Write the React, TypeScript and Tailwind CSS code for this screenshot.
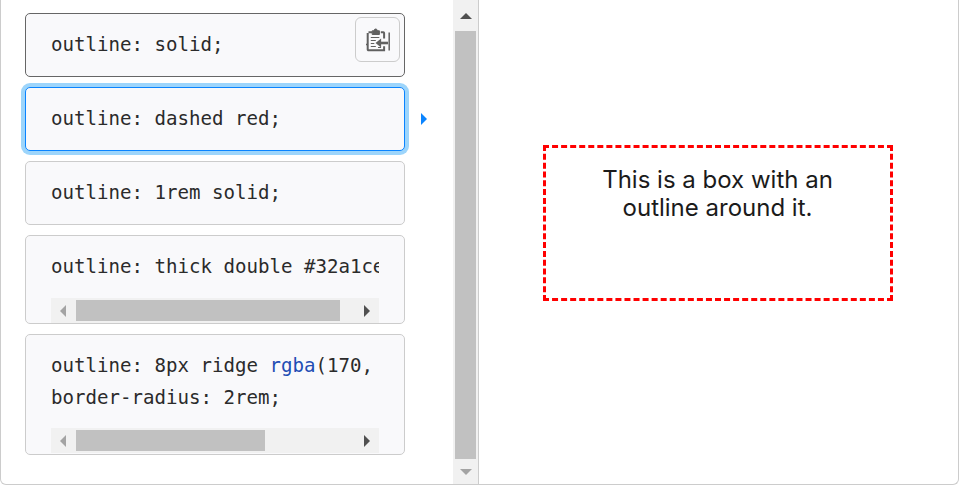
import React from "react";

function HBar({ thumb }: { thumb: string }) {
  return (
    <div className="flex h-[25px] w-[328px] items-center bg-[#f1f1f1]">
      <div className="flex h-full w-[25px] shrink-0 items-center justify-center pr-[1px]">
        <div className="h-0 w-0 border-y-[6px] border-r-[6px] border-y-transparent border-r-[#a3a3a3]" />
      </div>
      <div className="flex h-[21px] flex-1">
        <div className={`h-full bg-[#c1c1c1] ${thumb}`} />
      </div>
      <div className="flex h-full w-[25px] shrink-0 items-center justify-center">
        <div className="h-0 w-0 border-y-[6px] border-l-[6px] border-y-transparent border-l-[#505050]" />
      </div>
    </div>
  );
}

function ClipIcon() {
  return (
    <svg width="24" height="24" viewBox="0 0 24 24" fill="none" stroke="#606060">
      <path d="M1.7 5v16.5a.8.8 0 0 0 .8.8h15.6v-4M18.1 10.5V5a.8.8 0 0 0-.8-.8h-2.5M6 4.2H2.5" strokeWidth="2" />
      <path d="M0 16.5h1.7" strokeWidth="1.5" />
      <path d="M6.2 6.5V2.8h1.6C8.3.4 11 .4 11.5 2.8h1.9v3.7z" fill="#606060" strokeWidth="1" />
      <path d="M4.8 9.5h8.5M4.8 12.5h5M4.8 15.5h3.5M4.8 18.5h5M12 19.5h3" strokeWidth="1.2" />
      <path d="M23.2 4.5v18" strokeWidth="1.5" />
      <path d="M22 15H13" strokeWidth="2.6" />
      <path d="M9.5 15l5.6-4.6v9.2z" fill="#606060" stroke="none" />
    </svg>
  );
}

const line = "block h-[32.5px] whitespace-pre font-['DejaVu_Sans_Mono',monospace] text-[19.1px] leading-[32.5px]";

export default function App() {
  return (
    <div className="flex h-[485px] w-[959px] overflow-hidden rounded-b-[6px] border-x border-b border-[#cccccc] bg-white font-['Liberation_Sans',sans-serif]">
      <div className="flex w-[478px] shrink-0 border-r border-[#cccccc]">
        <div className="flex w-[452px] shrink-0 flex-col gap-[10px] pl-[24px] pt-[13px] text-[#2b2b2b]">
          <div className="relative w-[380px] rounded-[5px] border border-[#666666] bg-[#f9f9fb] px-[25px] py-[14.75px]">
            <code className={line}>outline: solid;</code>
            <button className="absolute right-[4px] top-[3px] flex h-[45px] w-[45px] items-center justify-center rounded-[6px] border border-[#cccccc] bg-[#f9f9fb]">
              <ClipIcon />
            </button>
          </div>

          <div className="relative w-[380px] rounded-[5px] border border-[#0a84ff] bg-[#f9f9fb] px-[25px] py-[14.75px] shadow-[0_0_0_4px_#9dd5fb]">
            <code className={line}>outline: dashed red;</code>
            <div className="absolute left-[395px] top-[25px] h-0 w-0 border-y-[6px] border-l-[6px] border-y-transparent border-l-[#0a84ff]" />
          </div>

          <div className="w-[380px] rounded-[5px] border border-[#cccccc] bg-[#f9f9fb] px-[25px] py-[14.75px]">
            <code className={line}>outline: 1rem solid;</code>
          </div>

          <div className="w-[380px] rounded-[5px] border border-[#cccccc] bg-[#f9f9fb] pl-[25px]">
            <div className="w-[328px] overflow-hidden py-[14.75px]">
              <code className={line}>outline: thick double #32a1ce;</code>
            </div>
            <HBar thumb="w-[264px]" />
          </div>

          <div className="w-[380px] rounded-[5px] border border-[#cccccc] bg-[#f9f9fb] pb-[1px] pl-[25px]">
            <div className="w-[328px] overflow-hidden pb-[13.5px] pt-[14.75px]">
              <code className={line}>
                outline: 8px ridge <span className="text-[#1f4eb4]">rgba</span>(170, 50, 220, .6);
              </code>
              <code className={line}>border-radius: 2rem;</code>
            </div>
            <HBar thumb="w-[189px]" />
          </div>
        </div>

        <div className="flex w-[25px] shrink-0 flex-col items-center bg-[#f1f1f1]">
          <div className="flex h-[31px] items-center justify-center">
            <div className="h-0 w-0 border-x-[6px] border-b-[6px] border-x-transparent border-b-[#505050]" />
          </div>
          <div className="w-[21px] flex-1 bg-[#c1c1c1]" />
          <div className="flex h-[25px] items-center justify-center">
            <div className="h-0 w-0 border-x-[6px] border-t-[6px] border-x-transparent border-t-[#a3a3a3]" />
          </div>
        </div>
      </div>

      <div className="flex flex-1 justify-center pr-[2px] pt-[148px]">
        <div className="h-[150px] w-[344px] px-[30px] pt-[18px] text-center font-['Inter',sans-serif] text-[24px] leading-[28px] text-[#1b1b1b] outline-3 outline-[#ff0000] outline-dashed">
          This is a box with an outline around it.
        </div>
      </div>
    </div>
  );
}
